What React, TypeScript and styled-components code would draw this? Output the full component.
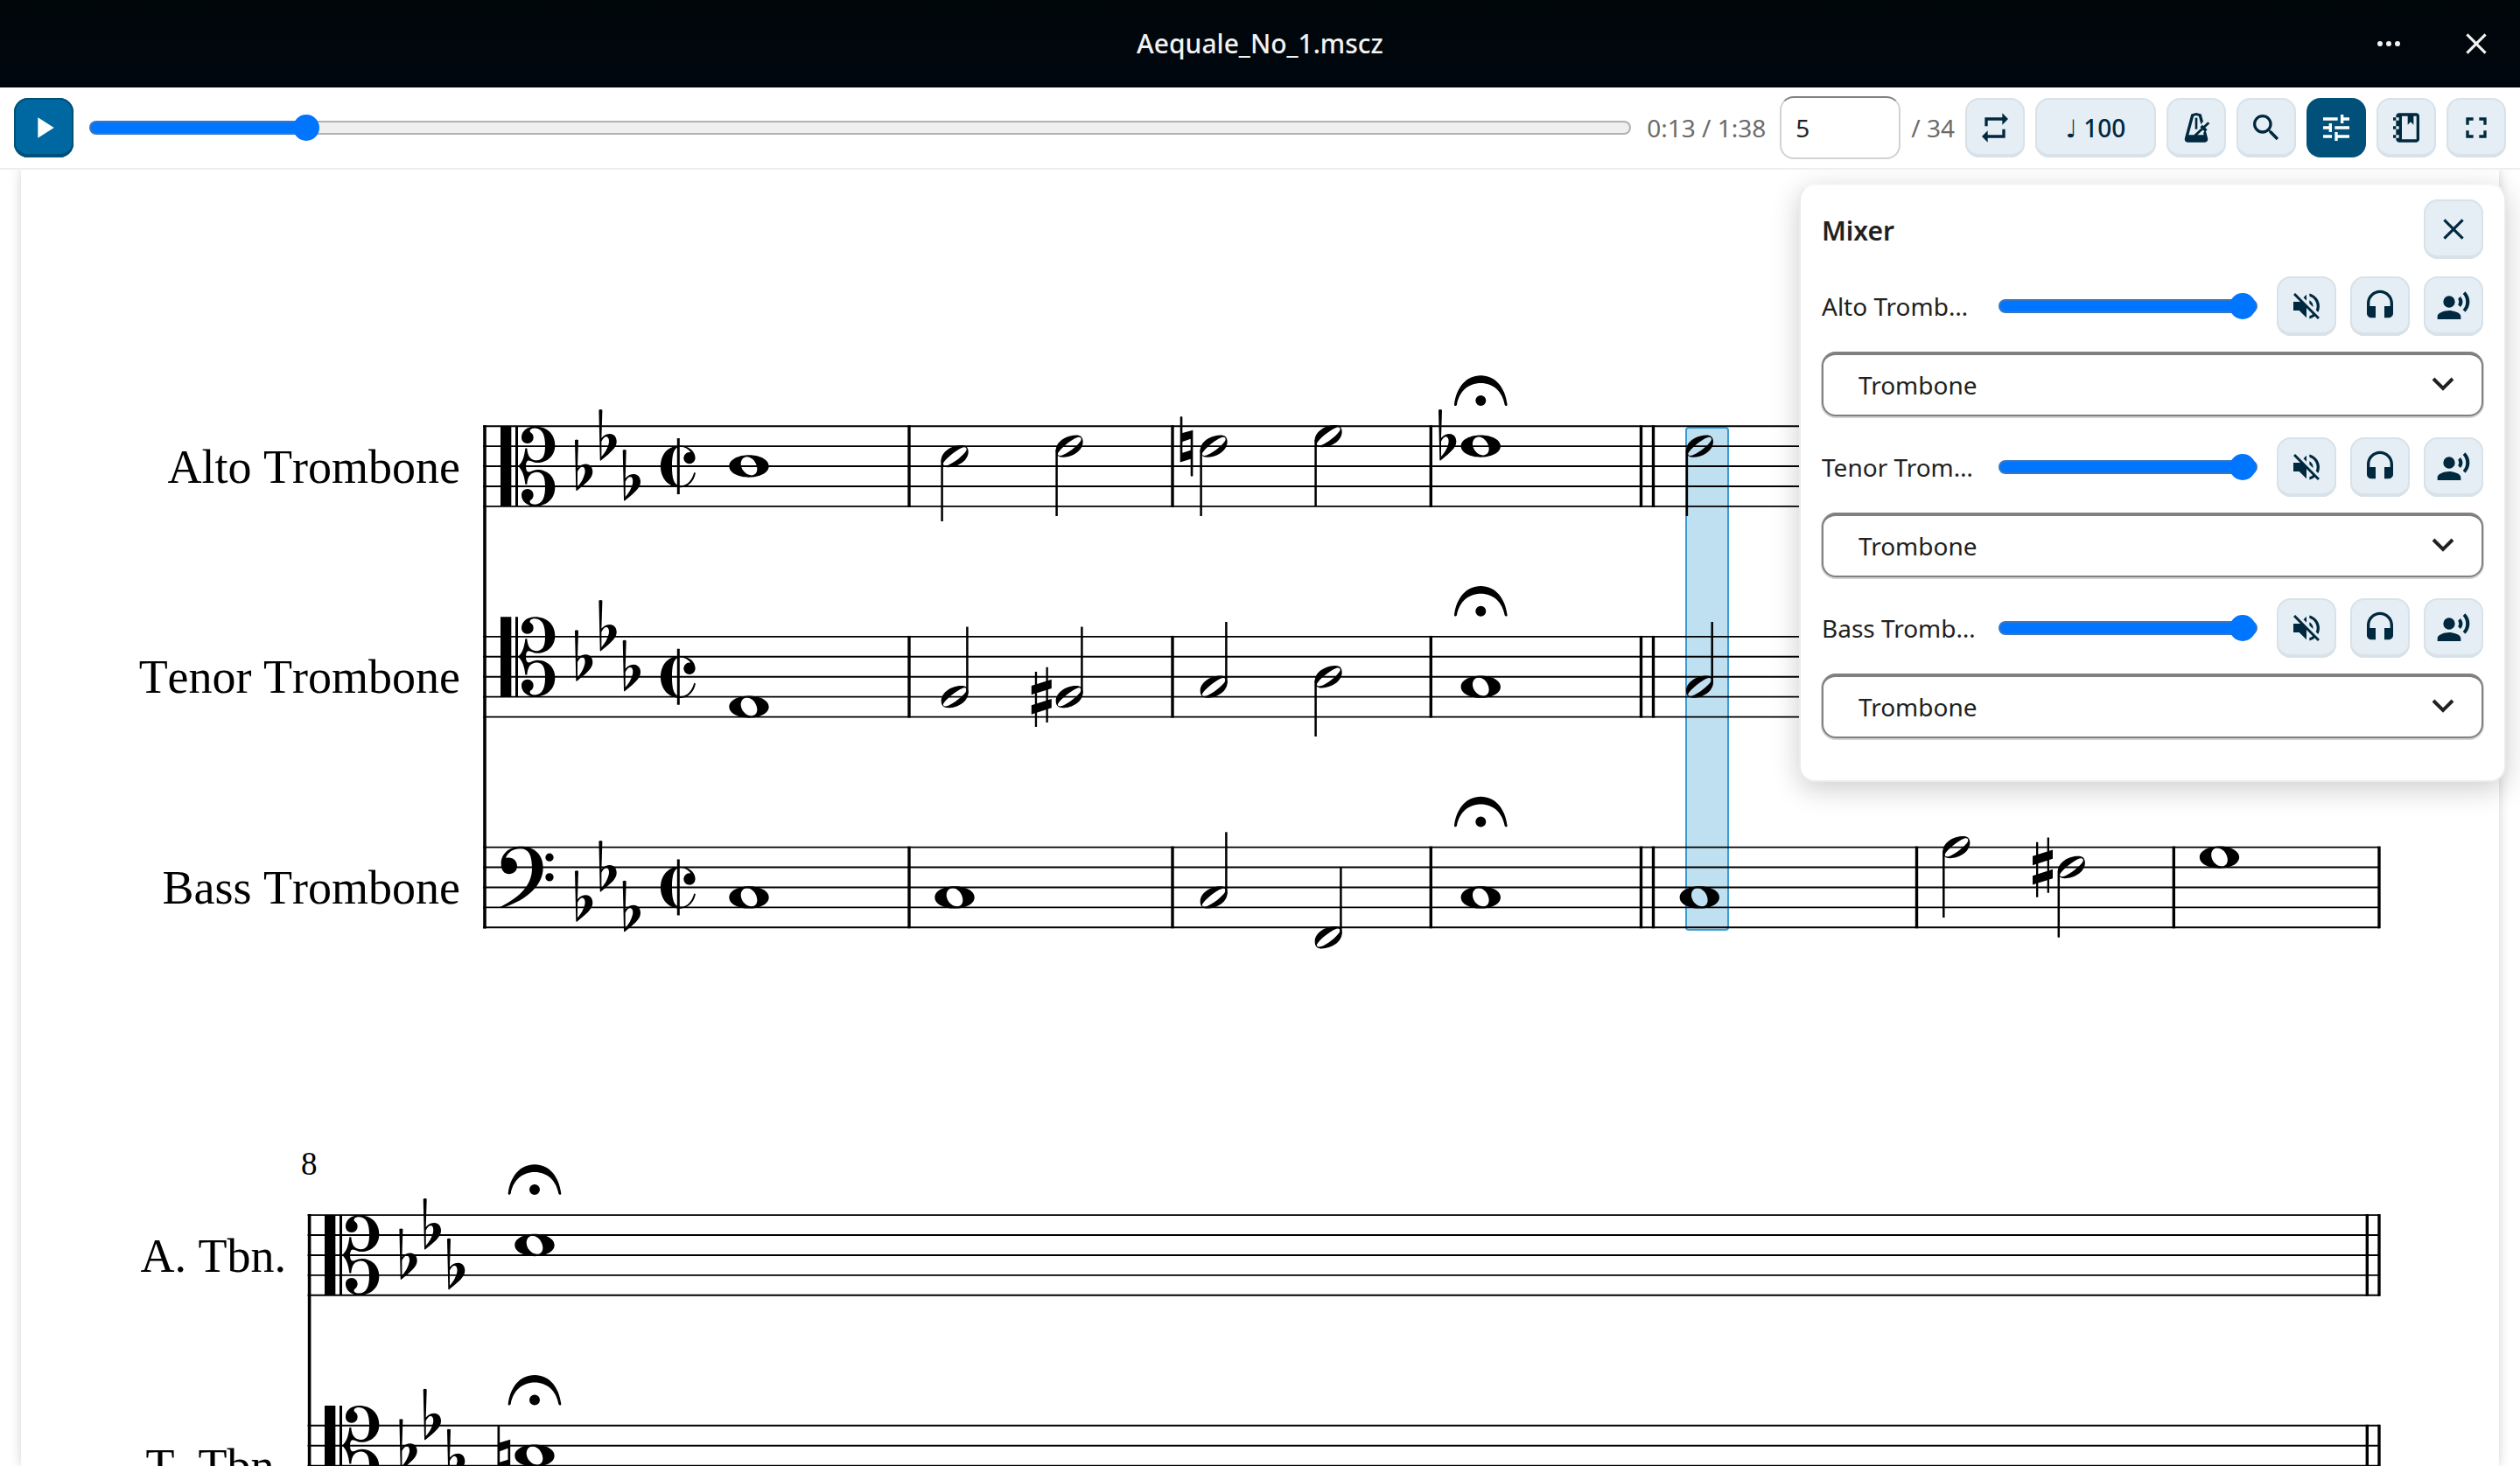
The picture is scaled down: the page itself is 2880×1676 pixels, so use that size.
import React, { useState } from "react";
import styled, { createGlobalStyle, css } from "styled-components";

const color = {
  ink: "#212121",
  muted: "#6b6b6b",
  navy: "#00283e",
  tint: "#e5eef5",
  tintEdge: "#d8e2e8",
  primary: "#0068a0",
  primaryDark: "#005079",
  blue: "#0075ff",
  blueEdge: "#3a76bf",
  line: "#eeeeee",
};

const GlobalStyle = createGlobalStyle`
  *, *::before, *::after { box-sizing: border-box; }
  html, body, #root { height: 100%; }
  body {
    margin: 0;
    overflow: hidden;
    background: #ffffff;
    color: ${color.ink};
    font: 28px/40px "Noto Sans", "Open Sans", sans-serif;
  }
`;

const Shell = styled.div`
  display: flex;
  flex-direction: column;
  height: 100vh;
`;

const TitleBar = styled.header`
  display: grid;
  grid-template-columns: 1fr auto 1fr;
  align-items: center;
  flex: none;
  height: 100px;
  padding: 0 16px;
  background: linear-gradient(#00070a, #00060e);
  color: #f2f2f2;
`;

const Title = styled.h1`
  grid-column: 2;
  margin: 0;
  font-size: 30px;
  font-weight: 500;
`;

const TitleActions = styled.div`
  display: flex;
  justify-content: flex-end;
  gap: 32px;
`;

const TitleButton = styled.button`
  display: grid;
  place-items: center;
  width: 68px;
  height: 68px;
  padding: 0;
  border: 0;
  background: none;
  color: inherit;
`;

const Toolbar = styled.div`
  display: flex;
  align-items: center;
  gap: 12px;
  flex: none;
  height: 94px;
  padding: 0 16px;
  border-bottom: 2px solid ${color.line};
  color: ${color.muted};
`;

type Tone = "plain" | "primary" | "active";

const tones = {
  plain: css`
    background: ${color.tint};
    color: ${color.navy};
    box-shadow: inset 0 0 0 2px ${color.tintEdge}, inset 0 -4px 0 ${color.tintEdge};
  `,
  primary: css`
    background: ${color.primary};
    color: #ffffff;
    box-shadow: inset 0 0 0 2px ${color.primaryDark}, inset 0 -4px 0 ${color.primaryDark};
  `,
  active: css`
    background: ${color.primaryDark};
    color: #ffffff;
  `,
};

const Button = styled.button<{ $tone?: Tone; $wide?: boolean }>`
  display: inline-flex;
  align-items: center;
  justify-content: center;
  flex: none;
  width: ${(p) => (p.$wide ? 138 : 68)}px;
  height: 68px;
  padding: 0;
  border: 0;
  border-radius: 16px;
  font: 500 28px/40px "Noto Sans", "DejaVu Sans", sans-serif;
  ${(p) => tones[p.$tone ?? "plain"]}
`;

const track = css`
  box-sizing: border-box;
  height: 16px;
  border: 2px solid transparent;
  border-radius: 8px;
  background:
    linear-gradient(to right, ${color.blue} var(--fill), #efefef var(--fill)) padding-box,
    linear-gradient(to right, ${color.blueEdge} var(--fill), #b2b2b2 var(--fill)) border-box;
`;

const Range = styled.input`
  appearance: none;
  flex: 1;
  min-width: 0;
  height: 32px;
  margin: 0 6px;
  background: none;
  &::-webkit-slider-runnable-track { ${track} }
  &::-webkit-slider-thumb {
    appearance: none;
    width: 30px;
    height: 30px;
    margin-top: -9px;
    border-radius: 50%;
    background: ${color.blue};
  }
`;

const Clock = styled.output`
  flex: none;
  padding-right: 4px;
  white-space: nowrap;
`;

const MeasureField = styled.label`
  display: flex;
  align-items: center;
  gap: 12px;
  flex: none;
  white-space: nowrap;
`;

const MeasureInput = styled.input`
  width: 138px;
  height: 72px;
  padding: 0 16px;
  border: 2px solid #d2d2d2;
  border-top-color: #808080;
  border-radius: 16px;
  background: #ffffff;
  color: ${color.ink};
  font: inherit;
`;

const Viewer = styled.main`
  position: relative;
  flex: 1;
  min-height: 0;
  padding: 0 24px;
  overflow: hidden;
`;

const Page = styled.section`
  min-height: 100%;
  background: #ffffff;
  box-shadow: 0 0 12px rgba(0, 0, 0, 0.18);
`;

const ScoreDrawing = styled.svg`
  display: block;
  width: 100%;
  height: auto;
  font-family: "Liberation Serif", "Times New Roman", serif;
  font-kerning: none;
`;

const MixerPanel = styled.aside`
  position: absolute;
  top: 16px;
  right: 16px;
  width: 808px;
  padding: 16px 24px 48px;
  border: 2px solid #ececec;
  border-top-color: #f6f6f6;
  border-radius: 18px;
  background: #ffffff;
  box-shadow: 0 8px 32px rgba(0, 0, 0, 0.2);
`;

const MixerHeader = styled.div`
  display: flex;
  align-items: center;
  justify-content: space-between;
  margin-bottom: 20px;
`;

const MixerTitle = styled.h2`
  margin: 0;
  padding-top: 4px;
  font-size: 30px;
  font-weight: 600;
`;

const Channels = styled.div`
  display: grid;
  gap: 24px;
`;

const Channel = styled.div`
  display: grid;
  gap: 18px;
`;

const ChannelRow = styled.div`
  display: flex;
  align-items: center;
  gap: 16px;
`;

const ChannelName = styled.label`
  width: 180px;
  overflow: hidden;
  text-overflow: ellipsis;
  white-space: nowrap;
`;

const SelectBox = styled.div`
  display: grid;
  align-items: center;
  > * { grid-area: 1 / 1; }
  > svg {
    justify-self: end;
    margin: 2px 32px 0 0;
    pointer-events: none;
  }
`;

const Select = styled.select`
  appearance: none;
  width: 100%;
  height: 74px;
  padding: 0 80px 0 40px;
  border: 2px solid #808080;
  border-top-width: 4px;
  border-radius: 16px;
  background: #ffffff;
  box-shadow: 0 1px 0 1px #d2d2d2;
  color: ${color.ink};
  font: inherit;
`;

const Icon = ({ d, children }: { d?: string; children?: React.ReactNode }) => (
  <svg width="40" height="40" viewBox="0 0 24 24" fill="currentColor" fillRule="evenodd" aria-hidden="true">
    {d && <path d={d} />}
    {children}
  </svg>
);

const icons = {
  play: "M8 5v14l11-7z",
  more: "M6 10.2a1.8 1.8 0 1 0 0 3.6 1.8 1.8 0 0 0 0-3.6zm6 0a1.8 1.8 0 1 0 0 3.6 1.8 1.8 0 0 0 0-3.6zm6 0a1.8 1.8 0 1 0 0 3.6 1.8 1.8 0 0 0 0-3.6z",
  close: "M19 6.3 17.7 5 12 10.7 6.3 5 5 6.3 10.7 12 5 17.7 6.3 19 12 13.3 17.7 19 19 17.7 13.3 12z",
  repeat: "M7 7h10v3l4-4-4-4v3H5v6h2V7zm10 10H7v-3l-4 4 4 4v-3h12v-6h-2v4z",
  search:
    "M9.5,3A6.5,6.5 0 0,1 16,9.5C16,11.11 15.41,12.59 14.44,13.73L14.71,14H15.5L20.5,19L19,20.5L14,15.5V14.71L13.73,14.44C12.59,15.41 11.11,16 9.5,16A6.5,6.5 0 0,1 3,9.5A6.5,6.5 0 0,1 9.5,3M9.5,5C7,5 5,7 5,9.5C5,12 7,14 9.5,14C12,14 14,12 14,9.5C14,7 12,5 9.5,5Z",
  tune: "M3 17v2h6v-2H3zM3 5v2h10V5H3zm10 16v-2h8v-2h-8v-2h-2v6h2zM7 9v2H3v2h4v2h2V9H7zm14 4v-2H11v2h10zm-6-4h2V7h4V5h-4V3h-2v6z",
  notebook:
    "M7 2H19C20.1 2 21 2.9 21 4V20C21 21.1 20.1 22 19 22H7C5.9 22 5 21.1 5 20V19H3V17H5V13H3V11H5V7H3V5H5V4C5 2.9 5.9 2 7 2ZM9 4V20H19V4H17V10L15 8L13 10V4ZM5 5V7H7V5ZM5 11V13H7V11ZM5 17V19H7V17Z",
  fullscreen: "M7 14H5v5h5v-2H7v-3zm-2-4h2V7h3V5H5v5zm12 7h-3v2h5v-5h-2v3zM14 5v2h3v3h2V5h-5z",
  mute: "M16.5 12c0-1.77-1.02-3.29-2.5-4.03v2.21l2.45 2.45c.03-.2.05-.41.05-.63zm2.5 0c0 .94-.2 1.82-.54 2.64l1.51 1.51A8.796 8.796 0 0021 12c0-4.28-2.99-7.86-7-8.77v2.06c2.89.86 5 3.54 5 6.71zM4.27 3L3 4.27 7.73 9H3v6h4l5 5v-6.73l4.25 4.25c-.67.52-1.42.93-2.25 1.18v2.06a8.99 8.99 0 003.69-1.81L19.73 21 21 19.73l-9-9L4.27 3zM12 4L9.91 6.09 12 8.18V4z",
  solo: "M12 1c-4.97 0-9 4.03-9 9v7c0 1.66 1.34 3 3 3h3v-8H5v-2c0-3.87 3.13-7 7-7s7 3.13 7 7v2h-4v8h3c1.66 0 3-1.34 3-3v-7c0-4.97-4.03-9-9-9z",
  voice:
    "M9,5A4,4 0 0,1 13,9A4,4 0 0,1 9,13A4,4 0 0,1 5,9A4,4 0 0,1 9,5M9,15C11.67,15 17,16.34 17,19V21H1V19C1,16.34 6.33,15 9,15M16.76,5.36C18.78,7.56 18.78,10.61 16.76,12.63L15.08,10.94C15.92,9.76 15.92,8.23 15.08,7.05L16.76,5.36M20.07,2C24,6.05 23.97,12.11 20.07,16L18.44,14.37C21.21,11.19 21.21,6.65 18.44,3.63L20.07,2Z",
};

const MetronomeIcon = () => (
  <Icon d="M12 1.75L15.43 2.67L19.93 19.5C20.1 20.9 19.2 22 18 22H6C4.8 22 3.9 20.9 4.07 19.5L8.57 2.67ZM10.3 4L6.8 17H17.2L13.7 4L12 3.6Z">
    <path d="M14.5 14.5L19 9" stroke={color.tint} strokeWidth="5" />
    <path d="M12 5.2V13" stroke="currentColor" strokeWidth="1.6" />
    <path d="M11 17.6L20.6 8.6" stroke="currentColor" strokeWidth="1.7" />
    <path d="M15.4 10.8L18.8 14.2" stroke="currentColor" strokeWidth="2.2" />
  </Icon>
);

const Chevron = () => (
  <svg width="28" height="18" viewBox="0 0 28 18" fill="none" stroke={color.ink} strokeWidth="4" aria-hidden="true">
    <path d="M3 2L14 13L25 2" />
  </svg>
);

/* ---- Score engraving ---- */

const SPACE = 22.92;
const stepY = (top: number, step: number) => top + (step * SPACE) / 2;

const glyphs = {
  cClefHalf:
    "M60,0C76,-14 82,-35 85,-62L91,-62C93,-35 103,-20 126,-20C150,-22 153,-45 153,-72C153,-105 145,-130 118,-131C104,-131 98,-124 102,-117C109,-113 113,-107 113,-98A20,20 0 0 1 93,-78C80,-78 72,-87 72,-99C72,-121 92,-137 118,-137C160,-137 187,-110 187,-72C187,-35 160,-12 126,-12C110,-12 100,-24 92,-18C88,-14 87,-5 87,0Z",
  flat: "M0,-124Q6,-128 12,-124L9,-28C18,-38 28,-42 38,-42C52,-42 61,-30 61,-16C61,8 35,25 6,50L4,48ZM9,-16C14,-28 22,-34 28,-32C34,-30 36,-20 34,-10C30,8 20,24 9,36Z",
  natural:
    "M0,-100Q4,-104 8,-100V-45L44,-55V102Q40,106 36,102V44L0,55ZM8,-15V23L36,14V-25Z",
  sharp:
    "M0,-38L69,-60V-29L0,-7ZM0,29L69,7V38L0,60ZM12,-86H19V103H12ZM50,-102H57V88H50Z",
  half: "M-46,14C-46,-16 -10,-38 24,-38C39,-38 47,-31 47,-15C47,16 10,38 -22,38C-38,38 -46,30 -46,14ZM-39,24C-30,8 6,-22 28,-30C38,-33 43,-28 40,-20C32,-4 -4,24 -24,31C-34,34 -41,32 -39,24Z",
  whole:
    "M-68,0C-68,-24 -34,-38 0,-38C34,-38 68,-24 68,0C68,24 34,38 0,38C-34,38 -68,24 -68,0ZM-28,-8C-28,-24 -16,-33 -6,-32C12,-31 28,-10 28,9C28,24 18,32 7,31C-12,30 -28,10 -28,-8Z",
  fermata:
    "M-91,14C-84,-45 -50,-86 0,-86C50,-86 84,-45 91,14C91,19 84,19 82,14C74,-32 42,-60 0,-60C-42,-60 -74,-32 -82,14C-84,19 -91,19 -91,14ZM-18,0A18,18 0 1 0 18,0A18,18 0 1 0 -18,0Z",
  cut: "M4,-71C-34,-71 -61,-42 -61,0C-61,42 -34,73 6,73C34,73 54,50 59,23L54,21C47,46 32,67 8,67C-16,67 -22,40 -22,0C-22,-40 -16,-66 6,-67C22,-67 34,-59 42,-48A20,20 0 1 0 58,-28C58,-54 34,-71 4,-71Z",
  bass: "M2,-12C2,-48 32,-71 70,-71C118,-71 146,-42 146,2C146,62 88,115 3,140L0,136C60,104 108,66 108,4C108,-40 98,-64 68,-64C42,-64 24,-50 18,-32C40,-38 57,-24 57,-4C57,12 45,23 29,23C12,23 2,10 2,-12ZM154,-34a14,14 0 1 0 28,0a14,14 0 1 0 -28,0ZM154,34a14,14 0 1 0 28,0a14,14 0 1 0 -28,0Z",
};

type GlyphName = "flat" | "natural" | "sharp" | "half" | "whole" | "fermata" | "cut" | "bass";

const Glyph = ({ name, x, y }: { name: GlyphName; x: number; y: number }) => (
  <path
    d={glyphs[name]}
    transform={`translate(${x} ${y}) scale(0.3333)`}
    fillRule={name === "sharp" ? "nonzero" : "evenodd"}
  />
);

const CClef = ({ x, y }: { x: number; y: number }) => (
  <g transform={`translate(${x} ${y}) scale(0.3333)`}>
    <path d="M0,-137H37V137H0ZM51,-137H60V137H51Z" />
    <path d={glyphs.cClefHalf} />
    <path d={glyphs.cClefHalf} transform="scale(1 -1)" />
  </g>
);

interface Note {
  x: number;
  step: number;
  kind: "whole" | "half";
  stem?: "up" | "down";
  stemEnd?: number;
  accidental?: { name: "flat" | "natural" | "sharp"; x: number };
  fermata?: boolean;
}

interface StaffData {
  top: number;
  label: string;
  clef: "c" | "bass";
  clefStep: number;
  flats: number[];
  notes: Note[];
}

interface SystemData {
  left: number;
  right: number;
  labelEnd: number;
  bottom: number;
  clefX: number;
  flatX: number[];
  cutX?: number;
  bars: number[];
  staves: StaffData[];
}

const firstSystem: SystemData = {
  left: 554,
  right: 2719,
  labelEnd: 526,
  bottom: 1061.5,
  clefX: 572,
  flatX: [657, 684.4, 711.7],
  cutX: 775.3,
  bars: [1039, 1340, 1635.3, 1875.5, 1889.5, 2190.5, 2484.3, 2719],
  staves: [
    {
      top: 487.2,
      label: "Alto Trombone",
      clef: "c",
      clefStep: 4,
      flats: [5, 2, 6],
      notes: [
        { x: 856, step: 4, kind: "whole" },
        { x: 1091, step: 3, kind: "half", stem: "down", stemEnd: 596 },
        { x: 1222, step: 2, kind: "half", stem: "down", stemEnd: 590 },
        { x: 1387, step: 2, kind: "half", stem: "down", stemEnd: 590, accidental: { name: "natural", x: 1348.7 } },
        { x: 1518, step: 1, kind: "half", stem: "down", stemEnd: 578.5 },
        { x: 1692.3, step: 2, kind: "whole", accidental: { name: "flat", x: 1644 }, fermata: true },
        { x: 1942.3, step: 2, kind: "half", stem: "down", stemEnd: 590 },
      ],
    },
    {
      top: 727.9,
      label: "Tenor Trombone",
      clef: "c",
      clefStep: 2,
      flats: [3, 0, 4],
      notes: [
        { x: 856, step: 7, kind: "whole" },
        { x: 1091, step: 6, kind: "half", stem: "up", stemEnd: 716.6 },
        { x: 1222, step: 6, kind: "half", stem: "up", stemEnd: 716.6, accidental: { name: "sharp", x: 1178.8 } },
        { x: 1387, step: 5, kind: "half", stem: "up", stemEnd: 711 },
        { x: 1518, step: 4, kind: "half", stem: "down", stemEnd: 842 },
        { x: 1692.3, step: 5, kind: "whole", fermata: true },
        { x: 1942.3, step: 5, kind: "half", stem: "up", stemEnd: 711 },
      ],
    },
    {
      top: 968.6,
      label: "Bass Trombone",
      clef: "bass",
      clefStep: 2,
      flats: [6, 3, 7],
      notes: [
        { x: 856, step: 5, kind: "whole" },
        { x: 1091, step: 5, kind: "whole" },
        { x: 1387, step: 5, kind: "half", stem: "up", stemEnd: 951.3 },
        { x: 1518, step: 9, kind: "half", stem: "up", stemEnd: 991.6 },
        { x: 1692.3, step: 5, kind: "whole", fermata: true },
        { x: 1942.3, step: 5, kind: "whole" },
        { x: 2235.7, step: 0, kind: "half", stem: "down", stemEnd: 1049 },
        { x: 2367.2, step: 2, kind: "half", stem: "down", stemEnd: 1071.7, accidental: { name: "sharp", x: 2323 } },
        { x: 2536.5, step: 1, kind: "whole" },
      ],
    },
  ],
};

const secondSystem: SystemData = {
  left: 353.6,
  right: 2719,
  labelEnd: 327,
  bottom: 1800,
  clefX: 371,
  flatX: [456.4, 483.7, 511],
  bars: [2705.3, 2719],
  staves: [
    {
      top: 1389.1,
      label: "A. Tbn.",
      clef: "c",
      clefStep: 4,
      flats: [5, 2, 6],
      notes: [{ x: 611, step: 3, kind: "whole", fermata: true }],
    },
    {
      top: 1629.8,
      label: "T. Tbn.",
      clef: "c",
      clefStep: 2,
      flats: [3, 0, 4],
      notes: [{ x: 611, step: 3, kind: "whole", accidental: { name: "natural", x: 568.5 }, fermata: true }],
    },
  ],
};

const NoteMark = ({ note, top }: { note: Note; top: number }) => {
  const y = stepY(top, note.step);
  const stemX = note.stem === "up" ? note.x + 14.4 : note.x - 14.4;
  return (
    <g>
      {note.accidental && <Glyph name={note.accidental.name} x={note.accidental.x} y={y} />}
      <Glyph name={note.kind} x={note.x} y={y} />
      {note.stem && (
        <line x1={stemX} x2={stemX} y1={note.stem === "up" ? y - 4 : y + 4} y2={note.stemEnd} stroke="#000" strokeWidth="2.5" />
      )}
      {note.fermata && <Glyph name="fermata" x={note.x} y={top - 29.2} />}
    </g>
  );
};

const System = ({ data }: { data: SystemData }) => (
  <g>
    <line x1={data.left} x2={data.left} y1={data.staves[0].top - 1} y2={data.bottom} stroke="#000" strokeWidth="3.6" />
    {data.staves.map((staff) => (
      <g key={staff.label}>
        <text x={data.labelEnd} y={staff.top + 64.4} fontSize="54" textAnchor="end">
          {staff.label}
        </text>
        {[0, 2, 4, 6, 8].map((step) => (
          <line
            key={step}
            x1={data.left - 2}
            x2={data.right + 1}
            y1={stepY(staff.top, step)}
            y2={stepY(staff.top, step)}
            stroke="#000"
            strokeWidth="1.9"
          />
        ))}
        {data.bars.map((x) => (
          <line key={x} x1={x} x2={x} y1={staff.top - 1} y2={stepY(staff.top, 8) + 1} stroke="#000" strokeWidth="3.4" />
        ))}
        {staff.clef === "c" ? (
          <CClef x={data.clefX} y={stepY(staff.top, staff.clefStep)} />
        ) : (
          <Glyph name="bass" x={data.clefX} y={stepY(staff.top, staff.clefStep)} />
        )}
        {staff.flats.map((step, i) => (
          <Glyph key={step} name="flat" x={data.flatX[i]} y={stepY(staff.top, step)} />
        ))}
        {data.cutX && (
          <g>
            <Glyph name="cut" x={data.cutX} y={stepY(staff.top, 4)} />
            <line
              x1={data.cutX}
              x2={data.cutX}
              y1={stepY(staff.top, 4) - 32}
              y2={stepY(staff.top, 4) + 32}
              stroke="#000"
              strokeWidth="3"
            />
          </g>
        )}
        {staff.notes.map((note) => (
          <NoteMark key={note.x} note={note} top={staff.top} />
        ))}
      </g>
    ))}
  </g>
);

const Score = () => (
  <ScoreDrawing viewBox="24 194 2832 1482" role="img" aria-label="Score">
    <rect x="1927" y="489" width="48" height="574" rx="3" fill="#bee0f0" stroke="#3a9dd4" strokeWidth="2" />
    <System data={firstSystem} />
    <text x="344" y="1342.5" fontSize="37">
      8
    </text>
    <System data={secondSystem} />
  </ScoreDrawing>
);

/* ---- Controls ---- */

const Slider = ({ label, id, max, initial }: { label?: string; id?: string; max: number; initial: number }) => {
  const [value, setValue] = useState(initial);
  return (
    <Range
      id={id}
      type="range"
      min={0}
      max={max}
      step="any"
      value={value}
      aria-label={label}
      onChange={(e) => setValue(Number(e.target.value))}
      style={{ "--fill": `${(value / max) * 100}%` } as React.CSSProperties}
    />
  );
};

const MixerChannel = ({ name, id }: { name: string; id: string }) => (
  <Channel>
    <ChannelRow>
      <ChannelName htmlFor={id}>{name}</ChannelName>
      <Slider id={id} max={100} initial={100} />
      <Button type="button" aria-label="Mute"><Icon d={icons.mute} /></Button>
      <Button type="button" aria-label="Solo"><Icon d={icons.solo} /></Button>
      <Button type="button" aria-label="Emphasize"><Icon d={icons.voice} /></Button>
    </ChannelRow>
    <SelectBox>
      <Select aria-label="Instrument" defaultValue="Trombone">
        <option>Trombone</option>
      </Select>
      <Chevron />
    </SelectBox>
  </Channel>
);

export default function App() {
  const [measure, setMeasure] = useState("5");
  return (
    <>
      <GlobalStyle />
      <Shell>
        <TitleBar>
          <Title>Aequale_No_1.mscz</Title>
          <TitleActions>
            <TitleButton type="button" aria-label="More"><Icon d={icons.more} /></TitleButton>
            <TitleButton type="button" aria-label="Close"><Icon d={icons.close} /></TitleButton>
          </TitleActions>
        </TitleBar>
        <Toolbar>
          <Button type="button" $tone="primary" aria-label="Play"><Icon d={icons.play} /></Button>
          <Slider label="Position" max={98} initial={13.1} />
          <Clock>0:13 / 1:38</Clock>
          <MeasureField>
            <MeasureInput aria-label="Measure" value={measure} onChange={(e) => setMeasure(e.target.value)} />
            / 34
          </MeasureField>
          <Button type="button" aria-label="Repeat"><Icon d={icons.repeat} /></Button>
          <Button type="button" $wide>♩ 100</Button>
          <Button type="button" aria-label="Metronome"><MetronomeIcon /></Button>
          <Button type="button" aria-label="Search"><Icon d={icons.search} /></Button>
          <Button type="button" $tone="active" aria-label="Mixer"><Icon d={icons.tune} /></Button>
          <Button type="button" aria-label="Parts"><Icon d={icons.notebook} /></Button>
          <Button type="button" aria-label="Fullscreen"><Icon d={icons.fullscreen} /></Button>
        </Toolbar>
        <Viewer>
          <Page>
            <Score />
          </Page>
          <MixerPanel>
            <MixerHeader>
              <MixerTitle>Mixer</MixerTitle>
              <Button type="button" aria-label="Close mixer"><Icon d={icons.close} /></Button>
            </MixerHeader>
            <Channels>
              <MixerChannel id="alto" name="Alto Trombone" />
              <MixerChannel id="tenor" name="Tenor Trombone" />
              <MixerChannel id="bass" name="Bass Trombone" />
            </Channels>
          </MixerPanel>
        </Viewer>
      </Shell>
    </>
  );
}
